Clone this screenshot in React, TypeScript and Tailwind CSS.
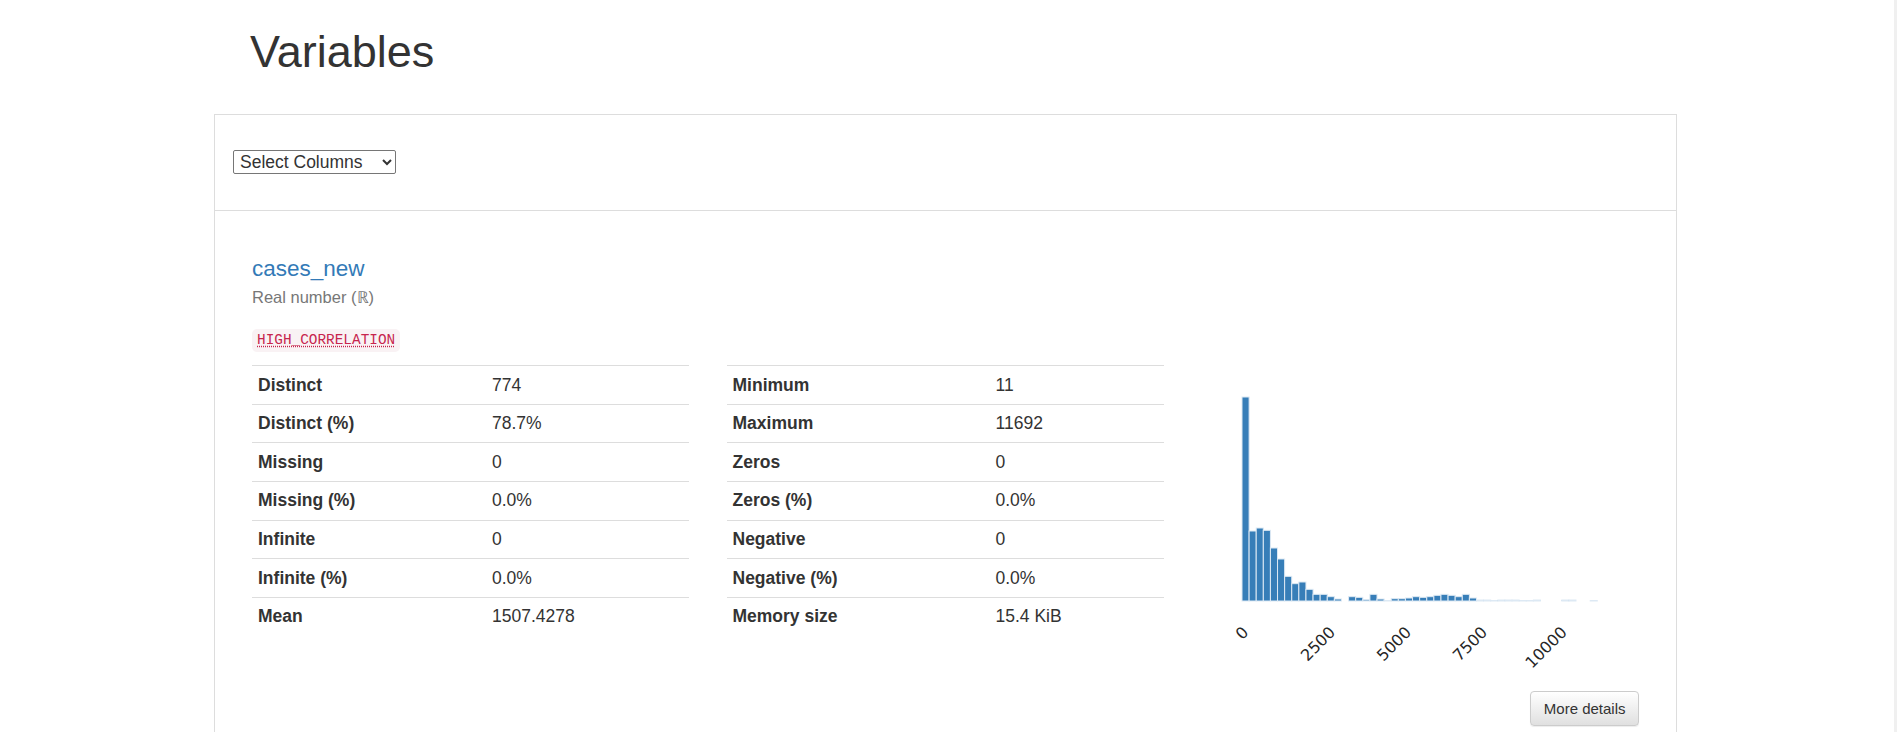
import React from "react";

const leftStats = [
  ["Distinct", "774"],
  ["Distinct (%)", "78.7%"],
  ["Missing", "0"],
  ["Missing (%)", "0.0%"],
  ["Infinite", "0"],
  ["Infinite (%)", "0.0%"],
  ["Mean", "1507.4278"],
];

const rightStats = [
  ["Minimum", "11"],
  ["Maximum", "11692"],
  ["Zeros", "0"],
  ["Zeros (%)", "0.0%"],
  ["Negative", "0"],
  ["Negative (%)", "0.0%"],
  ["Memory size", "15.4 KiB"],
];

// bin heights, measured at 3x
const bins = [
  612, 210, 219, 212, 159, 126, 74, 52, 57, 35, 20, 20, 13, 6, 0, 13, 11, 4, 20, 6, 1, 7, 7, 9, 13,
  11, 13, 17, 20, 17, 13, 20, 9, 3, 3, 1, 3, 3, 3, 1, 1, 3, 0, 0, 0, 3, 3, 0, 0, 1,
];

const ticks = [0, 2500, 5000, 7500, 10000];

const StatsTable = ({ rows, labelWidth }: { rows: string[][]; labelWidth: string }) => (
  <table className="w-full border-collapse text-[17.5px] leading-[25px] text-[#333]">
    <tbody>
      {rows.map(([label, value]) => (
        <tr key={label} className="border-t border-[#ddd]">
          <th className={`${labelWidth} py-[6.3px] pl-[6px] text-left font-bold`}>{label}</th>
          <td className="py-[6.3px] pl-[6px]">{value}</td>
        </tr>
      ))}
    </tbody>
  </table>
);

const Histogram = () => {
  const x0 = 41;
  const bw = 355.3 / bins.length;
  const base = 221;
  const fs = 16;
  return (
    <svg width="437" height="300" viewBox="0 0 437 300">
      {bins.map((h, i) => (
        <rect
          key={i}
          x={x0 + i * bw}
          y={base - h / 3}
          width={bw}
          height={h / 3}
          fill={h > 2 ? "#377eb8" : "#9fc3e4"}
          stroke="#dde9f4"
          strokeWidth="1"
        />
      ))}
      {ticks.map((v) => {
        const tx = x0 + (355.3 * (v - 11)) / 11681;
        const w = String(v).length * 0.636 * fs;
        const c = 0.729 * fs;
        const ox = tx + 0.3536 * (w + c);
        const oy = 245 + 0.7071 * c;
        return (
          <text
            key={v}
            x={0}
            y={0}
            textAnchor="end"
            fontSize={fs}
            fill="#262626"
            fontFamily="'DejaVu Sans', sans-serif"
            transform={`translate(${ox} ${oy}) rotate(-45)`}
          >
            {v}
          </text>
        );
      })}
    </svg>
  );
};

export default function App() {
  return (
    <div className="flex h-[732px] w-full overflow-hidden bg-white font-['Liberation_Sans',Arial,sans-serif] text-[#333]">
      <div className="flex-1">
        <div className="ml-[214px] w-[1463px]">
          <h1 className="ml-[36px] mt-[27px] text-[45px] font-normal leading-[49.5px]">Variables</h1>

          <div className="mt-[37.5px] border border-[#ddd]">
            <div className="border-b border-[#ddd] pb-[35px] pl-[18px] pt-[35px]">
              <select className="h-[24px] w-[163px] rounded-[2px] border border-[#767676] bg-white pl-[2px] text-[17.5px] leading-[20px] text-[#333]">
                <option>Select Columns</option>
              </select>
            </div>

            <div className="pb-[40px] pl-[37px] pr-[37px] pt-[46px]">
              <div className="text-[22.5px] leading-[24.75px] text-[#337ab7]">cases_new</div>
              <div className="mt-[4px] text-[16.5px] leading-[22px] text-[#777]">
                Real number (ℝ)
              </div>
              <div className="mt-[21.5px] flex">
                <span className="flex h-[23px] items-center rounded-[5px] bg-[#f9f2f4] px-[5px] font-['Liberation_Mono',monospace] text-[14.4px] text-[#c7254e] underline decoration-dotted underline-offset-[2px]">
                  HIGH_CORRELATION
                </span>
              </div>

              <div className="mt-[13px] flex gap-[37.5px]">
                <div className="w-[437px]">
                  <StatsTable rows={leftStats} labelWidth="w-[234px]" />
                </div>
                <div className="w-[437px]">
                  <StatsTable rows={rightStats} labelWidth="w-[263px]" />
                </div>
                <div className="w-[437px] pt-[15px]">
                  <Histogram />
                </div>
              </div>

              <div className="mt-[11px] flex justify-end">
                <button className="h-[35px] rounded-[4px] border border-[#ccc] bg-gradient-to-b from-white to-[#e0e0e0] px-[12.5px] text-[15px] text-[#333] shadow-[0_1px_1px_rgba(0,0,0,0.075)]">
                  More details
                </button>
              </div>
            </div>
          </div>
        </div>
      </div>
      <div className="w-[3px] bg-[#f0f0f0]" />
    </div>
  );
}
